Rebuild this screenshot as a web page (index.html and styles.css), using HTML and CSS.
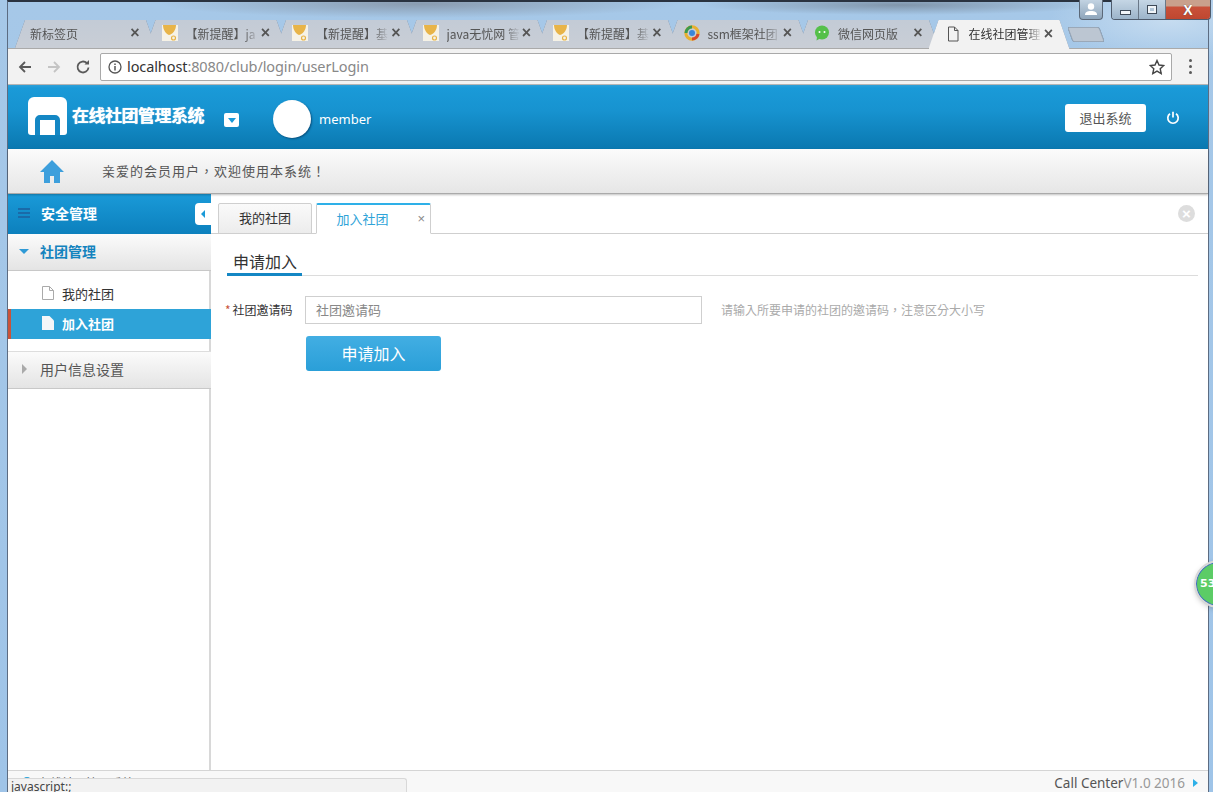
FILE: index.html
```html
<!DOCTYPE html>
<html lang="zh">
<head>
<meta charset="utf-8">
<title>在线社团管理系统</title>
<link rel="stylesheet" href="styles.css">
</head>
<body>
<div class="window">
  <div class="caption">
    <button class="cap-user"><svg width="14" height="13" viewBox="0 0 14 13"><circle cx="7" cy="3.5" r="3.2" fill="#fff"/><path d="M1 12c0-3 2-4 6-4s6 1 6 4z" fill="#fff"/></svg></button>
    <div class="cap-group">
      <button class="cap-btn"><span class="cap-min"></span></button>
      <button class="cap-btn"><span class="cap-max"></span></button>
      <button class="cap-btn cap-close">X</button>
    </div>
  </div>
  <div class="tabstrip">
    <div class="tab"><span class="tab-title">新标签页</span><span class="tab-x">×</span></div>
    <div class="tab"><svg class="fav" viewBox="0 0 16 16"><use href="#bell"/></svg><span class="tab-title">【新提醒】ja</span><span class="tab-x">×</span></div>
    <div class="tab"><svg class="fav" viewBox="0 0 16 16"><use href="#bell"/></svg><span class="tab-title">【新提醒】基</span><span class="tab-x">×</span></div>
    <div class="tab"><svg class="fav" viewBox="0 0 16 16"><use href="#bell"/></svg><span class="tab-title">java无忧网 管</span><span class="tab-x">×</span></div>
    <div class="tab"><svg class="fav" viewBox="0 0 16 16"><use href="#bell"/></svg><span class="tab-title">【新提醒】基</span><span class="tab-x">×</span></div>
    <div class="tab"><svg class="fav" viewBox="0 0 16 16"><circle cx="8" cy="8" r="6.2" fill="none" stroke="#e8b030" stroke-width="3"/><path d="M2 8a6 6 0 0 1 6-6" fill="none" stroke="#3a9a50" stroke-width="3"/><path d="M8 14a6 6 0 0 0 6-5" fill="none" stroke="#d8482c" stroke-width="3"/><circle cx="8" cy="8" r="3" fill="#3a86d8"/></svg><span class="tab-title">ssm框架社团</span><span class="tab-x">×</span></div>
    <div class="tab"><svg class="fav" viewBox="0 0 16 16"><circle cx="8" cy="7.5" r="7" fill="#55c04a"/><path d="M3 12l-.5 3.5L7 13z" fill="#55c04a"/><circle cx="5.5" cy="7" r="1" fill="#fff"/><circle cx="10.5" cy="7" r="1" fill="#fff"/></svg><span class="tab-title">微信网页版</span><span class="tab-x">×</span></div>
    <div class="tab tab-active"><svg class="fav" viewBox="0 0 16 16"><path d="M3.5 1h6l3.500 3.500V15h-9.500z M9.500 1v3.500H13" fill="none" stroke="#555" stroke-width="1"/></svg><span class="tab-title">在线社团管理</span><span class="tab-x">×</span></div>
    <div class="newtab"></div>
  </div>
  <div class="toolbar">
    <svg class="tb-ico" viewBox="0 0 16 16"><path d="M14 8H3M8 3L3 8l5 5" fill="none" stroke="#5a5a5a" stroke-width="1.800"/></svg>
    <svg class="tb-ico" viewBox="0 0 16 16"><path d="M2 8h11M8 3l5 5-5 5" fill="none" stroke="#c4c4c4" stroke-width="1.800"/></svg>
    <svg class="tb-ico" viewBox="0 0 16 16"><path d="M13.500 8.500A5.500 5.500 0 1 1 11.800 4" fill="none" stroke="#5a5a5a" stroke-width="1.800"/><path d="M9.500 5.600h4.500V1z" fill="#5a5a5a"/></svg>
    <div class="omnibox">
      <svg class="info" viewBox="0 0 14 14"><circle cx="7" cy="7" r="6" fill="none" stroke="#555" stroke-width="1.300"/><path d="M7 6v4.500M7 3.500v1.400" stroke="#555" stroke-width="1.500"/></svg>
      <span class="url"><span class="url-host">localhost</span>:8080/club/login/userLogin</span>
      <svg class="star" viewBox="0 0 16 16"><path d="M8 1.500l2 4.500 4.800.5-3.600 3.200 1 4.800L8 12.100l-4.200 2.400 1-4.800L1.200 6.500 6 6z" fill="none" stroke="#444" stroke-width="1.400"/></svg>
    </div>
    <div class="dots"><i></i><i></i><i></i></div>
  </div>
  <div class="page">
    <header class="top">
      <div class="logo"><svg width="39" height="38" viewBox="0 0 39 38"><path d="M6 0h27a6 6 0 0 1 6 6v29a3 3 0 0 1-3 3H3a3 3 0 0 1-3-3V6a6 6 0 0 1 6-6z" fill="#fff"/><path d="M7 38V23a5 5 0 0 1 5-5h15a5 5 0 0 1 5 5v15h-5V23H12v15z" fill="#1487c4"/></svg><span class="logo-text">在线社团管理系统</span></div>
      <span class="drop"></span>
      <span class="avatar"></span>
      <span class="uname">member</span>
      <span class="top-fill"></span>
      <button class="exit">退出系统</button>
      <svg class="power" viewBox="0 0 14 14"><path d="M4 2.800a5.200 5.200 0 1 0 6 0M7 .8v5.700" fill="none" stroke="#fff" stroke-width="1.700"/></svg>
    </header>
    <div class="welcome">
      <svg class="home" viewBox="0 0 24 23"><path d="M12 0L0 12h4v11h6v-7h4v7h6V12h4z" fill="#3d9fdc"/></svg>
      <span class="welcome-text" lang="zh-TW">亲爱的会员用户，欢迎使用本系统！</span>
    </div>
    <div class="body">
      <aside class="side">
        <div class="side-title">
          <svg class="list" viewBox="0 0 12 10"><path d="M0 0h12v2H0zM0 4h12v2H0zM0 8h12v2H0z" fill="#1a6aa8"/></svg>
          <span>安全管理</span>
          <span class="collapse"></span>
        </div>
        <div class="group group-open"><span class="tri-down"></span>社团管理</div>
        <ul class="items">
          <li class="item"><svg class="doc" viewBox="0 0 12 14"><path d="M.5.500h7l4 4v9H.5z" fill="#fff" stroke="#aaa"/><path d="M7.500.500v4h4" fill="none" stroke="#aaa"/></svg>我的社团</li>
          <li class="item item-on"><svg class="doc" viewBox="0 0 12 14"><path d="M0 0h7.500L12 4.500V14H0z" fill="#f4f6f8"/></svg>加入社团</li>
        </ul>
        <div class="group"><span class="tri-right"></span>用户信息设置</div>
      </aside>
      <main class="main">
        <div class="ctabs">
          <div class="ctab">我的社团</div>
          <div class="ctab ctab-on">加入社团<span class="ctab-x">×</span></div>
          <span class="ctabs-fill"></span>
          <span class="closeall">×</span>
        </div>
        <section class="panel">
          <div class="sec"><span class="sec-title">申请加入</span></div>
          <form class="form">
            <div class="row">
              <label class="lbl"><span class="req">*</span>社团邀请码</label>
              <input class="ipt" type="text" placeholder="社团邀请码">
              <span class="help" lang="zh-TW">请输入所要申请的社团的邀请码，注意区分大小写</span>
            </div>
            <button type="button" class="submit">申请加入</button>
          </form>
        </section>
      </main>
    </div>
    <footer class="foot">
      <span class="foot-left"><i class="foot-dot"></i>在线社团管理系统</span>
      <span class="top-fill"></span>
      <span class="foot-call">Call Center</span><span class="foot-ver">V1.0 2016</span>
      <span class="foot-arrow"></span>
    </footer>
  </div>
</div>
<div class="status">javascript:;</div>
<div class="ball"><span>53</span></div>
<svg width="0" height="0" class="defs"><defs><g id="bell"><rect width="16" height="16" fill="#f6f2e6"/><path d="M1 0h13c0 5-3 9-7 10C4 9 1 5 1 0z" fill="#e8b448"/><circle cx="11.500" cy="13" r="2" fill="none" stroke="#e8b448" stroke-width="1.200"/></g></defs></svg>
</body>
</html>
```
FILE: styles.css
```css
* { box-sizing: border-box; }
html, body { margin: 0; height: 100%; overflow: hidden; }
body {
  position: relative;
  width: 1213px;
  height: 792px;
  padding: 0 4px 0 7px;
  background:
    radial-gradient(ellipse 260px 14px at 420px 4px, #8a9cb0, transparent),
    radial-gradient(ellipse 200px 10px at 900px 5px, #8196ab, transparent),
    radial-gradient(ellipse 120px 40px at 1170px 20px, #c6dcf0, transparent),
    linear-gradient(180deg, #a6c8e8, #9fc4e8);
  font-family: "Noto Sans CJK SC", "Noto Sans", sans-serif;
  color: #333;
}
button { font-family: inherit; border: 0; padding: 0; }
ul { list-style: none; margin: 0; padding: 0; }
.defs { position: absolute; }

.window {
  height: 792px;
  display: flex;
  flex-direction: column;
  position: relative;
  border-left: 1px solid #5c6c82;
  border-right: 1px solid #5c6c82;
  border-top: 2px solid #2a3340;
}

/* window caption buttons */
.caption { position: absolute; top: -2px; right: -3px; display: flex; align-items: flex-start; gap: 8px; z-index: 3; }
.cap-user {
  width: 24px; height: 20px;
  display: flex; align-items: center; justify-content: center;
  background: linear-gradient(180deg, #c2d3e2, #8ea5bb);
  border: 1px solid #5b6878; border-top: 0; border-radius: 0 0 4px 4px;
}
.cap-group { display: flex; border: 1px solid #4e5b6c; border-top: 0; border-radius: 0 0 4px 4px; overflow: hidden; }
.cap-btn {
  width: 27px; height: 19px;
  display: flex; align-items: center; justify-content: center;
  background: linear-gradient(180deg, #c5d6e5, #9cb4ca);
  border-right: 1px solid #6a7888;
}
.cap-min { width: 11px; height: 5px; margin-top: 6px; background: #f2f6fa; border: 1px solid #3e4a58; }
.cap-max { width: 10px; height: 9px; border: 1px solid #3e4a58; box-shadow: inset 0 0 0 2px #f0f4f8; }
.cap-close {
  width: 44px; border: 0;
  background: linear-gradient(180deg, #c9a08c 0, #c9a08c 6px, #c9513a 7px, #bf4730);
  color: #fff; font: 700 14px "Liberation Sans", sans-serif;
  text-shadow: 0 0 1px #444;
}

/* chrome tabs */
.tabstrip {
  height: 46px; padding: 18px 0 0 7px;
  display: flex; align-items: stretch;
  position: relative; z-index: 1;
  filter: drop-shadow(0 0 .6px #5f7a96);
}
.tab {
  width: 141px;
  margin-right: -10.500px;
  padding: 0 14px 2px 15px;
  display: flex;
  align-items: center;
  background: linear-gradient(180deg, #c3cbd6, #c9ced6);
  clip-path: polygon(0 100%, 10px 0, calc(100% - 10px) 0, 100% 100%);
  font-size: 12px;
  color: #555;
}
.tab:nth-child(n+2) { padding-left: 16px; }
.tab-active { background: #f2f2f2; color: #333; position: relative; z-index: 1; margin-bottom: -1px; }
.fav { width: 16px; height: 16px; flex: none; margin-right: 8px; }
.tab-title {
  flex: 1; min-width: 0;
  overflow: hidden; white-space: nowrap;
  -webkit-mask-image: linear-gradient(90deg, #000 78%, transparent 100%);
  mask-image: linear-gradient(90deg, #000 78%, transparent 100%);
}
.tab:first-child .tab-title { -webkit-mask-image: none; mask-image: none; }
.tab-x { flex: none; width: 14px; text-align: center; font: 700 16px/1 "Liberation Sans", sans-serif; color: #555; }
.newtab {
  width: 32px; height: 15px; margin: 7px 0 0 11px;
  background: #bcc6d2;
  border: 1px solid #9aa8b8;
  transform: skewX(20deg);
  border-radius: 2px;
}

/* toolbar */
.toolbar {
  height: 37px;
  background: #f2f2f2;
  border-top: 1px solid #aaa;
  border-bottom: 1px solid #b5b5b5;
  display: flex;
  align-items: center;
  padding-left: 9px;
}
.tb-ico { width: 16px; height: 16px; margin-right: 13px; flex: none; }
.omnibox {
  width: 1072px; height: 28px;
  margin-left: -4px;
  background: #fff;
  border: 1px solid #a9a9a9;
  border-radius: 2px;
  display: flex; align-items: center;
  padding: 0 6px 0 7px;
}
.info { width: 14px; height: 14px; margin-right: 5px; flex: none; }
.url { flex: 1; font: 14.500px "Noto Sans", sans-serif; color: #888; letter-spacing: -.1px; padding-bottom: 2px; }
.url-host { color: #333; }
.star { width: 16px; height: 16px; }
.dots { margin-left: 17px; display: flex; flex-direction: column; gap: 3px; }
.dots i { width: 3px; height: 3px; background: #5a5a5a; border-radius: 50%; display: block; }

/* page */
.page { flex: 1; min-height: 0; display: flex; flex-direction: column; background: #fff; }
.top {
  height: 64px; flex: none;
  display: flex; align-items: center;
  padding-left: 20px;
  background: linear-gradient(180deg, #2fa0d8 0, #1a9ad8 3px, #1793d0 40%, #0a78b0 100%);
}
.logo { display: flex; align-items: center; margin-top: -2px; }
.logo-text { font-size: 17px; font-weight: 700; color: #fff; margin-left: 5px; letter-spacing: -.5px; margin-top: -4px; text-shadow: 0 0 1px #fff; }
.drop {
  width: 15px; height: 14px; margin: 6px 34px 0 20px;
  background: #fff; border-radius: 2px;
  display: flex; align-items: center; justify-content: center;
}
.drop::after { content: ""; border: 4px solid transparent; border-top: 5px solid #1a9ad8; border-bottom: 0; }
.avatar { width: 38px; height: 38px; border-radius: 50%; background: #fff; box-shadow: 1px 1px 2px #08507e; margin-top: 4px; }
.uname { font: 13px "Noto Sans", sans-serif; color: #fff; margin-left: 8px; margin-top: 4px; }
.top-fill { flex: 1; }
.exit {
  width: 81px; height: 28px; margin-top: 2px;
  padding-bottom: 2px;
  background: #fff; color: #555; font-size: 13px;
  border-radius: 3px;
}
.power { width: 14px; height: 14px; margin: 2px 28px 0 20px; }

.welcome {
  height: 45px; flex: none;
  display: flex; align-items: center;
  padding-left: 32px;
  background: linear-gradient(180deg, #fbfbfb, #e6e6e6);
  border-bottom: 1px solid #aaa;
  box-shadow: 0 1px 2px rgba(0,0,0,.25);
  position: relative; z-index: 1;
}
.welcome-text {
  font-family: "Noto Sans CJK TC", sans-serif;
  font-size: 13px; letter-spacing: 1px; color: #555;
  padding-bottom: 2px;
}
.home { width: 24px; height: 23px; margin-right: 38px; }

.body { flex: 1; min-height: 0; display: flex; }
.side {
  width: 203px; flex: none;
  background: linear-gradient(90deg, #fff 201px, #d8d8d8 201px);
}
.side-title {
  height: 40px; position: relative;
  display: flex; align-items: center;
  padding: 0 0 2px 10px;
  background: linear-gradient(180deg, #1a9ad8, #0c80bd);
  color: #fff; font-size: 14px; font-weight: 700;
}
.list { width: 12px; height: 10px; margin-right: 11px; }
.collapse {
  position: absolute; right: 0; top: 9px;
  width: 16px; height: 22px;
  background: #fff; border-radius: 4px 0 0 4px;
  display: flex; align-items: center; justify-content: center;
}
.collapse::after { content: ""; border: 4px solid transparent; border-right: 4px solid #1a9ad8; border-left: 0; }
.group {
  height: 38px;
  display: flex; align-items: center;
  padding-bottom: 2px;
  background: linear-gradient(180deg, #fbfbfb, #e4e4e4);
  border-bottom: 1px solid #c8c8c8;
  font-size: 14px; color: #555;
}
.group-open { height: 37px; color: #1483be; font-weight: 700; }
.tri-down { border: 5px solid transparent; border-top: 5px solid #2f9ad6; border-bottom: 0; margin: 0 11px 0 11px; }
.tri-right { border: 5px solid transparent; border-left: 5px solid #aaa; border-right: 0; margin: 0 13px 0 14px; }
.items { padding: 8px 0 12px; background: linear-gradient(90deg, #fff 201px, #d8d8d8 201px); }
.item {
  height: 30px;
  display: flex; align-items: center;
  padding: 0 0 2px 34px;
  font-size: 13px; color: #333;
}
.doc { width: 12px; height: 14px; margin-right: 8px; }
.item-on { background: #2ea3d8; color: #fff; font-weight: 700; border-left: 3px solid #c9533a; padding-left: 31px; }
.items + .group { border-top: 1px solid #ddd; }

.main { flex: 1; min-width: 0; display: flex; flex-direction: column; }
.ctabs {
  height: 40px; flex: none;
  padding: 8px 13px 0 7px;
  display: flex; align-items: flex-end; gap: 4px;
  border-bottom: 1px solid #cfcfcf;
}
.ctab {
  width: 94px; height: 31px; margin-bottom: -1px;
  display: flex; align-items: center; justify-content: center;
  padding-bottom: 2px;
  background: linear-gradient(180deg, #fafafa, #ececec);
  border: 1px solid #cfcfcf;
  border-radius: 2px 2px 0 0;
  font-size: 13px; color: #333;
  position: relative;
}
.ctab-on {
  width: 115px; padding-right: 22px;
  background: #fff; color: #2ea3d8;
  border-top: 2px solid #2eb0e8;
  border-bottom-color: #fff;
}
.ctab-x { position: absolute; right: 5px; top: 6px; font: 13px "Liberation Sans", sans-serif; color: #888; }
.ctabs-fill { flex: 1; }
.closeall {
  width: 17px; height: 17px; margin-bottom: 11px;
  border-radius: 50%; background: #ddd; color: #fff;
  font: 700 15px/17px "Liberation Sans", sans-serif; text-align: center;
}

.panel { padding: 16px 10px 0 16px; }
.sec { height: 26px; border-bottom: 1px solid #dcdcdc; display: flex; }
.sec-title {
  width: 75px; height: 26px; padding-left: 6px;
  border-bottom: 3px solid #1487c4;
  font-size: 16px; line-height: 22px; color: #333;
  white-space: nowrap;
}
.form { padding-top: 20px; }
.row { display: flex; align-items: center; }
.lbl { width: 80px; margin-left: -2px; padding-bottom: 2px; font-size: 12px; color: #333; white-space: nowrap; }
.req { color: #c9533a; margin-right: 2px; }
.ipt {
  width: 397px; height: 28px; padding: 0 10px 2px;
  border: 1px solid #cfcfcf; outline: 0;
  font: 13px "Noto Sans CJK SC", sans-serif; color: #333;
}
.ipt::placeholder { color: #888; opacity: 1; }
.help { margin-left: 19px; padding-bottom: 2px; font-family: "Noto Sans CJK TC", sans-serif; font-size: 12px; color: #aaa; }
.submit {
  display: block;
  width: 135px; height: 35px; margin: 12px 0 0 79px;
  padding-bottom: 2px;
  background: linear-gradient(180deg, #42aee3, #2a9fd8);
  border-radius: 3px;
  color: #fff; font-size: 16px;
}

.foot {
  height: 22px; flex: none;
  display: flex; align-items: center;
  background: #f8f8f8;
  border-top: 1px solid #d5d5d5;
  padding: 3px 10px 0 14px;
  font: 13.500px "Noto Sans", sans-serif;
}
.foot-left { align-self: flex-start; margin-top: -3px; display: flex; align-items: flex-start; height: 21px; padding-top: 6px; font: 12px/12px "Noto Sans CJK SC", sans-serif; color: #555; }
.foot-dot { width: 10px; height: 10px; border-radius: 50%; background: #2ea3d8; margin-right: 6px; }
.foot-call { color: #555; }
.foot-ver { color: #999; }
.foot-arrow { border: 4px solid transparent; border-left: 5px solid #2eb0e8; border-right: 0; margin-left: 8px; }

.status {
  position: absolute; left: 8px; bottom: 0;
  width: 399px; height: 14px;
  background: #f2f2f2;
  border: 1px solid #d8d8d8; border-left: 0; border-bottom: 0;
  border-radius: 0 3px 0 0;
  font: 12px/15px "Noto Sans", sans-serif; color: #444;
  padding-left: 3px;
}
.ball {
  position: absolute; left: 1196px; top: 562px;
  width: 46px; height: 44px;
  border-radius: 50%;
  background: #5ccc66;
  border: 1px solid #3b6cc0;
  outline: 2px solid #d8d8d8;
  box-shadow: 0 2px 6px rgba(0,0,0,.3);
  color: #fff; font: 700 11px/42px "DejaVu Sans", sans-serif;
  padding-left: 3px;
}
```
